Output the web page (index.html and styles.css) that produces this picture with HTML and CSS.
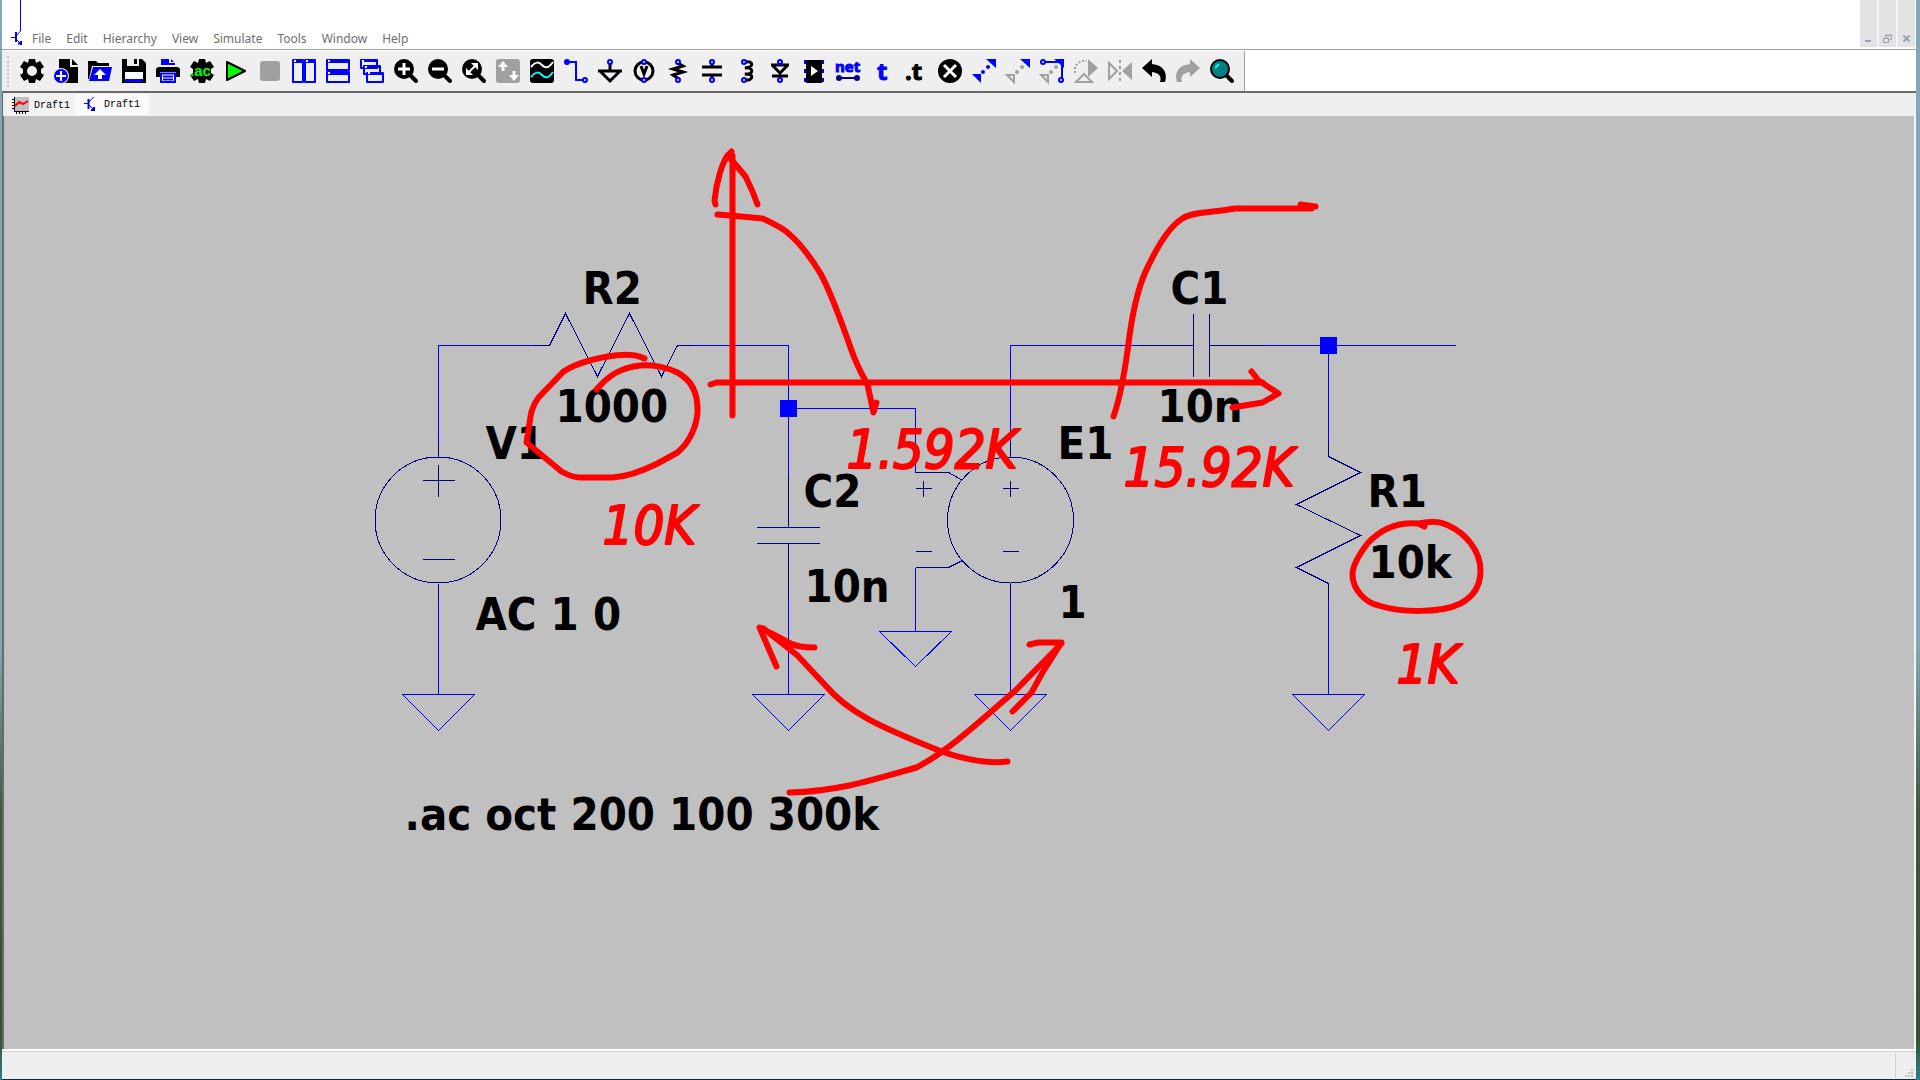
FILE: index.html
```html
<!DOCTYPE html>
<html lang="en">
<head>
    <meta charset="UTF-8">
    <meta name="viewport" content="width=device-width, initial-scale=1.0">
    <title>Draft1</title>
    <link rel="stylesheet" href="styles.css">
</head>
<body>
    <div class="window">
        <header class="menubar">
            <svg class="app-icon" width="14" height="47" viewBox="0 0 14 47">
                <path d="M10.500 0V31L6 36M6 39L10 43" />
                <path d="M1 37.500H5" />
                <path class="thick" d="M6 32V42M8 43.500H12M11 41V45" />
            </svg>
            <nav class="menu">
                <button>File</button>
                <button>Edit</button>
                <button>Hierarchy</button>
                <button>View</button>
                <button>Simulate</button>
                <button>Tools</button>
                <button>Window</button>
                <button>Help</button>
            </nav>
            <div class="window-controls">
                <button aria-label="Minimize"><svg width="9" height="9"><path d="M1 7H7" /></svg></button>
                <button aria-label="Restore"><svg width="9" height="9"><path class="thin" d="M.5 4.500H5.500V8.500H.5ZM2.500 3V1.500H8.500V5.500H6.500M2.500 1H9M1 4H6" /></svg></button>
                <button aria-label="Close"><svg width="9" height="9"><path d="M1.500 1.500L7.500 7.500M7.500 1.500L1.500 7.500" /></svg></button>
            </div>
        </header>

        <div class="toolbar-row">
            <div class="toolbar">
                <button aria-label="Settings"><svg viewBox="0 0 24 24"><path fill-rule="evenodd" d="M9 0H15L16 4L20 2L24 8L21 10V14L24 16L20 22L16 20L15 24H9L8 20L4 22L0 16L3 14V10L0 8L4 2L8 4ZM12 7A5 5 0 1 0 12 17A5 5 0 1 0 12 7Z" /></svg></button>
                <button aria-label="New schematic"><svg viewBox="0 0 24 24"><path d="M5 0H16V8H24V24H5Z" /><path d="M18 0L24 6H18Z" /><circle cx="7" cy="17" r="8" fill="#efefef" /><circle class="blue" cx="7" cy="17" r="7" /><path class="line white" d="M7 12V22M2 17H12" /></svg></button>
                <button aria-label="Open"><svg viewBox="0 0 24 24"><path d="M0 2H8L10 4H21V7H4L1 20H0Z" /><path class="blue" d="M5 8H24L21 22H1Z" /><path fill="#fff" d="M12 10L18 16H14V20H10V16H6Z" /></svg></button>
                <button aria-label="Save"><svg viewBox="0 0 24 24"><path d="M0 0H5V7H17V0H20L24 4V24H0Z" /><path d="M12 0H15V5H12Z" /><path fill="#fff" d="M3 13H21V20H3Z" /><path class="blue" d="M3 20H21V23H3Z" /></svg></button>
                <button aria-label="Print"><svg viewBox="0 0 24 24"><path class="blue" d="M5 0H13V4H19V6H5ZM15 0L18 3H15Z" /><path d="M2 8H22L24 10V18H0V10Z" /><path fill="#fff" d="M4 13H20V24H4Z" /><path class="line blue-line" d="M5 14.500H19V23H5ZM7 17.500H17M7 20.500H17" /></svg></button>
                <button aria-label="Run AC analysis"><svg viewBox="0 0 24 24"><path d="M9 0H15L16 4L20 2L24 8L21 10V14L24 16L20 22L16 20L15 24H9L8 20L4 22L0 16L3 14V10L0 8L4 2L8 4Z" /><text class="ac-label" x="0" y="17">.ac</text></svg></button>
                <button aria-label="Run"><svg viewBox="0 0 24 24"><path class="play" d="M3 3L21 12L3 21Z" /></svg></button>
                <button aria-label="Stop"><svg viewBox="0 0 24 24"><rect class="gray" x="2" y="2" width="20" height="20" rx="3" /></svg></button>
                <button aria-label="Tile vertically"><svg viewBox="0 0 24 24"><path class="panel" d="M1 1H11V23H1ZM13 1H23V23H13Z" /><path class="line blue-line" d="M1 3H11M13 3H23" /><path class="dot" d="M2 2H4M14 2H16" /></svg></button>
                <button aria-label="Tile horizontally"><svg viewBox="0 0 24 24"><path class="panel" d="M1 1H23V11H1ZM1 13H23V23H1Z" /><path class="line blue-line" d="M1 3H23M1 15H23" /><path class="dot" d="M2 2H4M2 14H4" /></svg></button>
                <button aria-label="Cascade"><svg viewBox="0 0 24 24"><path class="panel" d="M1 1H17V9H1ZM4 7H20V15H4ZM7 14H23V23H7Z" /><path class="line blue-line" d="M1 2H17M4 8H20M7 15H23" /><path class="dot" d="M2 2H4M5 8H7M8 14H10" /></svg></button>
                <button aria-label="Zoom in"><svg viewBox="0 0 24 24"><path class="handle" d="M15 15L22 22" /><circle cx="10" cy="10" r="10" /><path class="white heavy" d="M10 4V16M4 10H16" /></svg></button>
                <button aria-label="Zoom out"><svg viewBox="0 0 24 24"><path class="handle" d="M15 15L22 22" /><circle cx="10" cy="10" r="10" /><path class="white heavy" d="M4 10H16" /></svg></button>
                <button aria-label="Zoom to fit"><svg viewBox="0 0 24 24"><path class="handle" d="M15 15L22 22" /><circle cx="10" cy="10" r="10" /><path class="white line" d="M6 14L14 6" /><path fill="#fff" d="M9 4H16V11ZM4 9V16H11Z" /></svg></button>
                <button aria-label="Autorange"><svg viewBox="0 0 24 24"><rect class="gray" width="24" height="24" rx="3" /><path class="white heavy" d="M7 12V5M18 12V19" /><path fill="#fff" d="M7 2L12 8H2ZM18 22L13 16H23Z" /></svg></button>
                <button aria-label="Waveform"><svg viewBox="0 0 24 24"><rect width="24" height="24" rx="3" /><path class="white line" d="M1 8C6 2 9 3 12 6S18 10 23 3" /><path class="cyan" d="M1 18C6 12 9 13 12 16S18 20 23 13" /></svg></button>
                <button aria-label="Wire"><svg viewBox="0 0 24 24"><circle class="blue" cx="3" cy="3" r="3" /><path class="line blue-line" d="M3 3H12V21H19" /><circle class="pin" cx="21" cy="21" r="2" /></svg></button>
                <button aria-label="Ground"><svg viewBox="0 0 24 24"><path class="part" d="M12 5V12M0 12H24M3 13L12 22L21 13" /><circle class="pin" cx="12" cy="3" r="2" /></svg></button>
                <button aria-label="Voltage source"><svg viewBox="0 0 24 24"><circle class="part" cx="12" cy="12" r="9" /><path class="part" d="M9 7L12 15L15 7" /><circle class="pin" cx="12" cy="3" r="2" /><circle class="pin" cx="12" cy="21" r="2" /></svg></button>
                <button aria-label="Resistor"><svg viewBox="0 0 24 24"><path class="part" d="M12 4L17 7L7 10L17 13L7 16L13 20" /><circle class="pin" cx="12" cy="3" r="2" /><circle class="pin" cx="12" cy="21" r="2" /></svg></button>
                <button aria-label="Capacitor"><svg viewBox="0 0 24 24"><path class="part" d="M2 8H22M2 16H22M12 4V8M12 16V20" /><circle class="pin" cx="12" cy="3" r="2" /><circle class="pin" cx="12" cy="21" r="2" /></svg></button>
                <button aria-label="Inductor"><svg viewBox="0 0 24 24"><path class="part" d="M11 3C20 1 20 9 11 9C20 7 20 17 11 15C20 14 20 22 11 21" /><circle class="pin" cx="10" cy="3" r="2" /><circle class="pin" cx="10" cy="21" r="2" /></svg></button>
                <button aria-label="Diode"><svg viewBox="0 0 24 24"><path class="part" d="M3 6H21M5 7L12 14L19 7M4 17H20" /><path class="line" stroke="#000" d="M12 14V18" /><circle class="pin" cx="12" cy="3" r="2" /><circle class="pin" cx="12" cy="21" r="2" /></svg></button>
                <button aria-label="Component"><svg viewBox="0 0 24 24"><rect x="4" y="1" width="16" height="23" /><path fill="#fff" d="M9 7L16 12L9 17Z" /><path class="line blue-line" stroke-dasharray="4 5" d="M3 1V24M21 1V24" /></svg></button>
                <button aria-label="Label net"><svg viewBox="0 0 24 24"><text class="tool-text" x="-1" y="13">net</text><path class="line navy-line" d="M3 19H21" /><circle cx="3" cy="19" r="3" fill="#000080" /><circle cx="21" cy="19" r="3" fill="#000080" /></svg></button>
                <button aria-label="Text"><svg viewBox="0 0 24 24"><text class="tool-text large" x="7" y="21">t</text></svg></button>
                <button aria-label="SPICE directive"><svg viewBox="0 0 24 24"><text class="tool-text large directive" x="1" y="21">.t</text></svg></button>
                <button aria-label="Delete"><svg viewBox="0 0 24 24"><circle cx="12" cy="12" r="12" /><path class="white heavy" d="M6 6L18 18M18 6L6 18" /></svg></button>
                <button aria-label="Move"><svg viewBox="0 0 24 24"><path class="blue" d="M14 0H24V9ZM0 15H9V24Z" /><circle class="blue" cx="11" cy="13" r="2" /><circle class="blue" cx="16" cy="8" r="2" /></svg></button>
                <button aria-label="Duplicate"><svg viewBox="0 0 24 24"><path class="blue" d="M14 0H24V9Z" /><path class="gray-line" d="M1 16H8V23Z" /><circle class="gray" cx="11" cy="13" r="2" /><circle class="gray" cx="16" cy="8" r="2" /></svg></button>
                <button aria-label="Drag"><svg viewBox="0 0 24 24"><path class="blue" d="M14 0H24V9Z" /><path class="gray-line" d="M1 16H8V23Z" /><circle class="gray" cx="11" cy="13" r="2" /><circle class="gray" cx="16" cy="8" r="2" /><path class="line blue-line" d="M4 3H22V20" /><circle class="pin" cx="3" cy="3" r="2" /><circle class="pin" cx="21" cy="21" r="2" /></svg></button>
                <button aria-label="Rotate"><svg viewBox="0 0 24 24"><path class="gray" d="M14 0L24 9L14 18Z" /><path class="gray-line" d="M10 15L2 23H18Z" /><path class="gray-line" stroke-dasharray="2 2" d="M1 14V7L7 2H13" /></svg></button>
                <button aria-label="Mirror"><svg viewBox="0 0 24 24"><path class="gray" d="M24 3V21L14 12Z" /><path class="gray-line" d="M1 4V20L9 12Z" /><path class="gray-line" stroke-dasharray="3 3" d="M12 1V23" /></svg></button>
                <button aria-label="Undo"><svg viewBox="0 0 24 24"><path d="M0 9L10 0V5C21 6 26 13 23 23H18C20 17 17 14 10 13V18Z" /></svg></button>
                <button aria-label="Redo"><svg viewBox="0 0 24 24"><path class="gray" d="M24 9L14 0V5C3 6 -2 13 1 23H6C4 17 7 14 14 13V18Z" /></svg></button>
                <button aria-label="Search"><svg viewBox="0 0 24 24"><path class="handle" d="M15 15L22 22" /><circle class="lens" cx="10" cy="10" r="9" /><path class="cyan" d="M5 9L9 5" /></svg></button>
            </div>
        </div>

        <div class="tabs" role="tablist">
            <button class="tab" role="tab">
                <svg width="17" height="17" viewBox="0 0 17 17"><path fill="#c0c0c0" d="M2 0H17V15H2Z" /><path class="axis" d="M2.500 0V14.500H17M0 2.500H2M0 5.500H2M0 8.500H2M0 11.500H2M4.500 15V17M7.500 15V17M10.500 15V17M13.500 15V17" /><path class="trace" d="M3 9L7 5L11 7L16 4" /></svg>
                <span>Draft1</span>
            </button>
            <button class="tab active" role="tab" aria-selected="true">
                <svg width="17" height="17" viewBox="0 0 17 17"><path class="transistor" d="M9.500 1L5 6M0 7.500H4M5 9L10 14" /><path class="transistor thick" d="M4.500 3V13M7 14H11M10 11V15" /></svg>
                <span>Draft1</span>
            </button>
        </div>

        <main class="sheet">
            <svg class="drawing" width="100%" height="100%">
                <g transform="translate(-3.500 -115.500)">
                    <!-- wires -->
                    <g class="wire">
                        <path d="M438 441V345H533M693 345H788V473M788 408H915V472M788 599V694" />
                        <path d="M915 567V631M1010 441V345H1137M1010 599V694M438 599V694" />
                        <path d="M1264 345H1455M1328 345V441M1328 599V694" />
                        <path d="M402 694H474L438 730ZM752 694H824L788 730ZM879 631H951L915 666ZM974 694H1046L1010 730ZM1292 694H1364L1328 730Z" />
                        <rect class="node" x="780" y="400" width="16" height="16" />
                        <rect class="node" x="1320" y="337" width="16" height="16" />
                    </g>

                    <!-- symbols -->
                    <g class="symbol">
                        <path d="M533 345H549L565 313L597 376L629 313L661 376L677 345H693" />
                        <circle cx="437.500" cy="519.500" r="63" />
                        <path d="M438 441V457M438 583V599M422 480H454M438 464V496M422 559H454" />
                        <path d="M788 473V527M756 527H819M756 543H819M788 543V599" />
                        <circle cx="1010" cy="519.500" r="63" />
                        <path d="M1010 441V457M1010 583V599M915 472H948L962 480M962 560L948 567H915" />
                        <path d="M915 488H931M923 480V496M1002 488H1018M1010 480V496M915 551H931M1002 551H1018" />
                        <path d="M1137 345H1193M1193 313V376M1209 313V376M1209 345H1264" />
                        <path d="M1328 441V456L1360 472L1296 504L1360 535L1296 567L1328 583V599" />
                    </g>

                    <g class="label">
                        <text x="582" y="303">R2</text>
                        <text x="555" y="421">1000</text>
                        <text x="485" y="458">V1</text>
                        <text x="475" y="629">AC 1 0</text>
                        <text x="803" y="506">C2</text>
                        <text x="804" y="601">10n</text>
                        <text x="1057" y="458">E1</text>
                        <text x="1058" y="617">1</text>
                        <text x="1170" y="303">C1</text>
                        <text x="1157" y="421">10n</text>
                        <text x="1367" y="506">R1</text>
                        <text x="1368" y="577">10k</text>
                        <text x="404" y="829">.ac oct 200 100 300k</text>
                    </g>

                    <!-- pen notes -->
                    <g class="ink">
                        <path d="M732 155V415M715 204L714 200C716 180 722 162 727 155L731 151M729 157L740 170L745 176L752 191L757 204" />
                        <path d="M717 214L730 215L762 218C775 224 785 230 788 233C800 243 812 260 820 273C832 295 842 325 850 347C858 370 864 378 867 384L873 412L876 402" />
                        <path d="M710 384L716 382H1262M1251 371L1258 380L1278 393L1262 402L1232 407" />
                        <path d="M1113 416C1121 393 1126 360 1129 335C1134 300 1140 280 1148 265C1158 244 1170 225 1182 218C1192 211 1214 212 1234 208H1311M1300 204L1315 206" />
                        <path d="M644 358C636 354 625 353 607 356C590 359 575 363 563 371L538 397C531 406 530 415 529 423L526 442L561 471C568 475 575 477 580 477H612C630 476 645 469 657 463L677 452C690 441 696 425 697 412C698 390 688 378 677 372C665 366 650 364 640 365C620 367 608 375 596 389" />
                        <path d="M1424 526L1418 523C1395 521 1378 531 1367 543C1357 556 1352 565 1352 574C1352 588 1364 602 1378 605C1400 612 1440 613 1460 603C1477 594 1480 580 1480 570C1480 550 1465 533 1448 525C1438 520 1430 521 1418 523" />
                        <path d="M789 792C840 791 880 777 916 767C950 749 980 720 1015 690L1061 643M1029 644L1038 642H1061L1042 672L1031 692L1012 711" />
                        <path d="M1007 761C985 764 955 757 931 747C890 730 850 715 825 685L797 655L763 628M776 666L769 650L759 627L775 635L790 643C798 647 806 647 814 647" />
                    </g>
                    <g class="note">
                        <text x="602" y="543">10K</text>
                        <text x="846" y="467">1.592K</text>
                        <text x="1123" y="485">15.92K</text>
                        <text x="1396" y="682">1K</text>
                    </g>
                </g>
            </svg>
        </main>

        <footer class="statusbar">
            <div class="status-text"></div>
            <svg class="grip" width="9" height="9"><path d="M6 0H8V2H6ZM3 3H5V5H3ZM6 3H8V5H6ZM0 6H2V8H0ZM3 6H5V8H3ZM6 6H8V8H6Z" /></svg>
        </footer>
    </div>
</body>
</html>
```

FILE: styles.css
```css
* {
    box-sizing: border-box;
}
body {
    margin: 0;
    height: 100vh;
    padding: 0 4px 0 2px;
    background: linear-gradient(#7fa9b8 0, #7fa9b8 60%, #3d5a3a 75%, #35502f 96%, #2f7f8c 100%);
    font-family: "Noto Sans", "Open Sans", sans-serif;
    font-size: 12px;
}
button {
    border: 0;
    padding: 0;
    background: none;
    font: inherit;
    color: inherit;
}
.window {
    display: flex;
    flex-direction: column;
    height: 100%;
    background: #efefef;
    border-bottom: 1px solid #0b3036;
    overflow: hidden;
}

/* menu */
.menubar {
    display: flex;
    align-items: flex-end;
    height: 50px;
    padding: 0 1px 2px 8px;
    background: #fff;
    border-bottom: 1px solid #a0a0a0;
}
.app-icon {
    fill: none;
    stroke: #0000ff;
}
.app-icon .thick {
    stroke-width: 2;
}
.menu {
    display: flex;
    flex: 1;
    gap: 15px;
    padding-left: 8px;
    color: #6d6d6d;
    line-height: 16px;
}
.window-controls {
    display: flex;
    gap: 2px;
    background: #f5f5f5;
}
.window-controls button {
    display: flex;
    align-items: flex-end;
    justify-content: center;
    width: 17px;
    height: 47px;
    padding-bottom: 4px;
    background: #e3e3e3;
}
.window-controls svg {
    fill: none;
    stroke: #95a3b3;
    stroke-width: 2;
}
.window-controls .thin {
    stroke-width: 1;
}

/* toolbar */
.toolbar-row {
    display: flex;
    height: 43px;
    padding-top: 1px;
    background: #fff;
    border-bottom: 2px solid #696969;
}
.toolbar {
    display: flex;
    align-items: center;
    gap: 10px;
    padding: 0 10px 0 14px;
    margin-left: 4px;
    background: #efefef;
    border-right: 1px solid #a0a0a0;
    box-shadow: -4px 0 #efefef;
    position: relative;
}
.toolbar::before {
    content: "";
    position: absolute;
    left: 1px;
    top: 5px;
    bottom: 4px;
    border-left: 2px dotted #c0c0c0;
}
.toolbar button {
    width: 24px;
    height: 24px;
}
.toolbar svg {
    display: block;
    width: 24px;
    height: 24px;
    overflow: visible;
}
.blue {
    fill: #0000ff;
}
.gray {
    fill: #a0a0a0;
}
.line, .heavy, .part, .handle, .cyan, .gray-line, .dot {
    fill: none;
    stroke-width: 2;
}
.part, .handle {
    stroke: #000;
}
.part, .heavy {
    stroke-width: 3;
}
.handle {
    stroke-width: 4;
    stroke-linecap: round;
}
.white, .dot {
    stroke: #fff;
}
.blue-line {
    stroke: #0000ff;
}
.navy-line {
    stroke: #000080;
}
.gray-line {
    stroke: #a0a0a0;
}
.cyan {
    stroke: #00ffff;
}
.panel {
    fill: #efefef;
    stroke: #0000ff;
    stroke-width: 2;
    stroke-linejoin: round;
}
.pin {
    fill: #efefef;
    stroke: #0000ff;
    stroke-width: 2;
}
.play {
    fill: #00ff00;
    stroke: #000;
    stroke-width: 2;
    stroke-linejoin: round;
}
.lens {
    fill: #008080;
    stroke: #000;
    stroke-width: 2;
}
.ac-label {
    font: bold 15px "Liberation Sans", sans-serif;
    fill: #00ff00;
}
.tool-text {
    font: bold 15px "Open Sans", "Noto Sans", sans-serif;
    fill: #0000ff;
    stroke: #0000ff;
}
.tool-text.large {
    font-size: 24px;
}
.tool-text.directive {
    fill: #000;
    stroke: #000;
}

/* tabs */
.tabs {
    display: flex;
    height: 23px;
    padding-left: 4px;
    border-left: 1px solid #696969;
}
.tab {
    display: flex;
    align-items: center;
    gap: 5px;
    height: 21px;
    margin-top: 1px;
    padding: 2px 5px 0 5px;
    background: #f2f2f2;
    font: 10px "Liberation Mono", monospace;
    color: #000;
}
.tab.active {
    gap: 3px;
    padding: 0 9px 0 9px;
    background: #fafafa;
}
.axis {
    fill: none;
    stroke: #000;
}
.trace {
    fill: none;
    stroke: #ff0000;
    stroke-width: 2;
}
.transistor {
    fill: none;
    stroke: #0000ff;
}
.transistor.thick {
    stroke-width: 2;
}

/* schematic */
.sheet {
    flex: 1;
    min-height: 0;
    border-left: 2px solid #696969;
    border-right: 2px solid #f5f5f5;
    background: #c0c0c0;
}
.drawing {
    display: block;
}
.wire, .symbol {
    fill: none;
    shape-rendering: crispEdges;
}
.wire {
    stroke: #0000ff;
}
.symbol {
    stroke: #000080;
}
.node {
    fill: #0000ff;
}
.label {
    font: bold 45px "DejaVu Sans Condensed", "DejaVu Sans", sans-serif;
    fill: #000;
}
.ink {
    fill: none;
    stroke: #ff0000;
    stroke-width: 6;
    stroke-linecap: round;
    stroke-linejoin: round;
}
.note {
    font: italic 54px "DejaVu Sans Condensed", "DejaVu Sans", sans-serif;
    fill: #ff0000;
    stroke: #ff0000;
    stroke-width: 2;
    stroke-linejoin: round;
}

/* status bar */
.statusbar {
    display: flex;
    align-items: flex-end;
    height: 30px;
    padding: 2px 2px 1px 0;
    border-top: 2px solid #fff;
    box-shadow: inset 0 1px #d0d0d0;
}
.status-text {
    flex: 1;
    height: 25px;
    margin-right: 9px;
    border-right: 1px solid #d0d0d0;
}
.grip {
    fill: #c0c0c0;
}
```
